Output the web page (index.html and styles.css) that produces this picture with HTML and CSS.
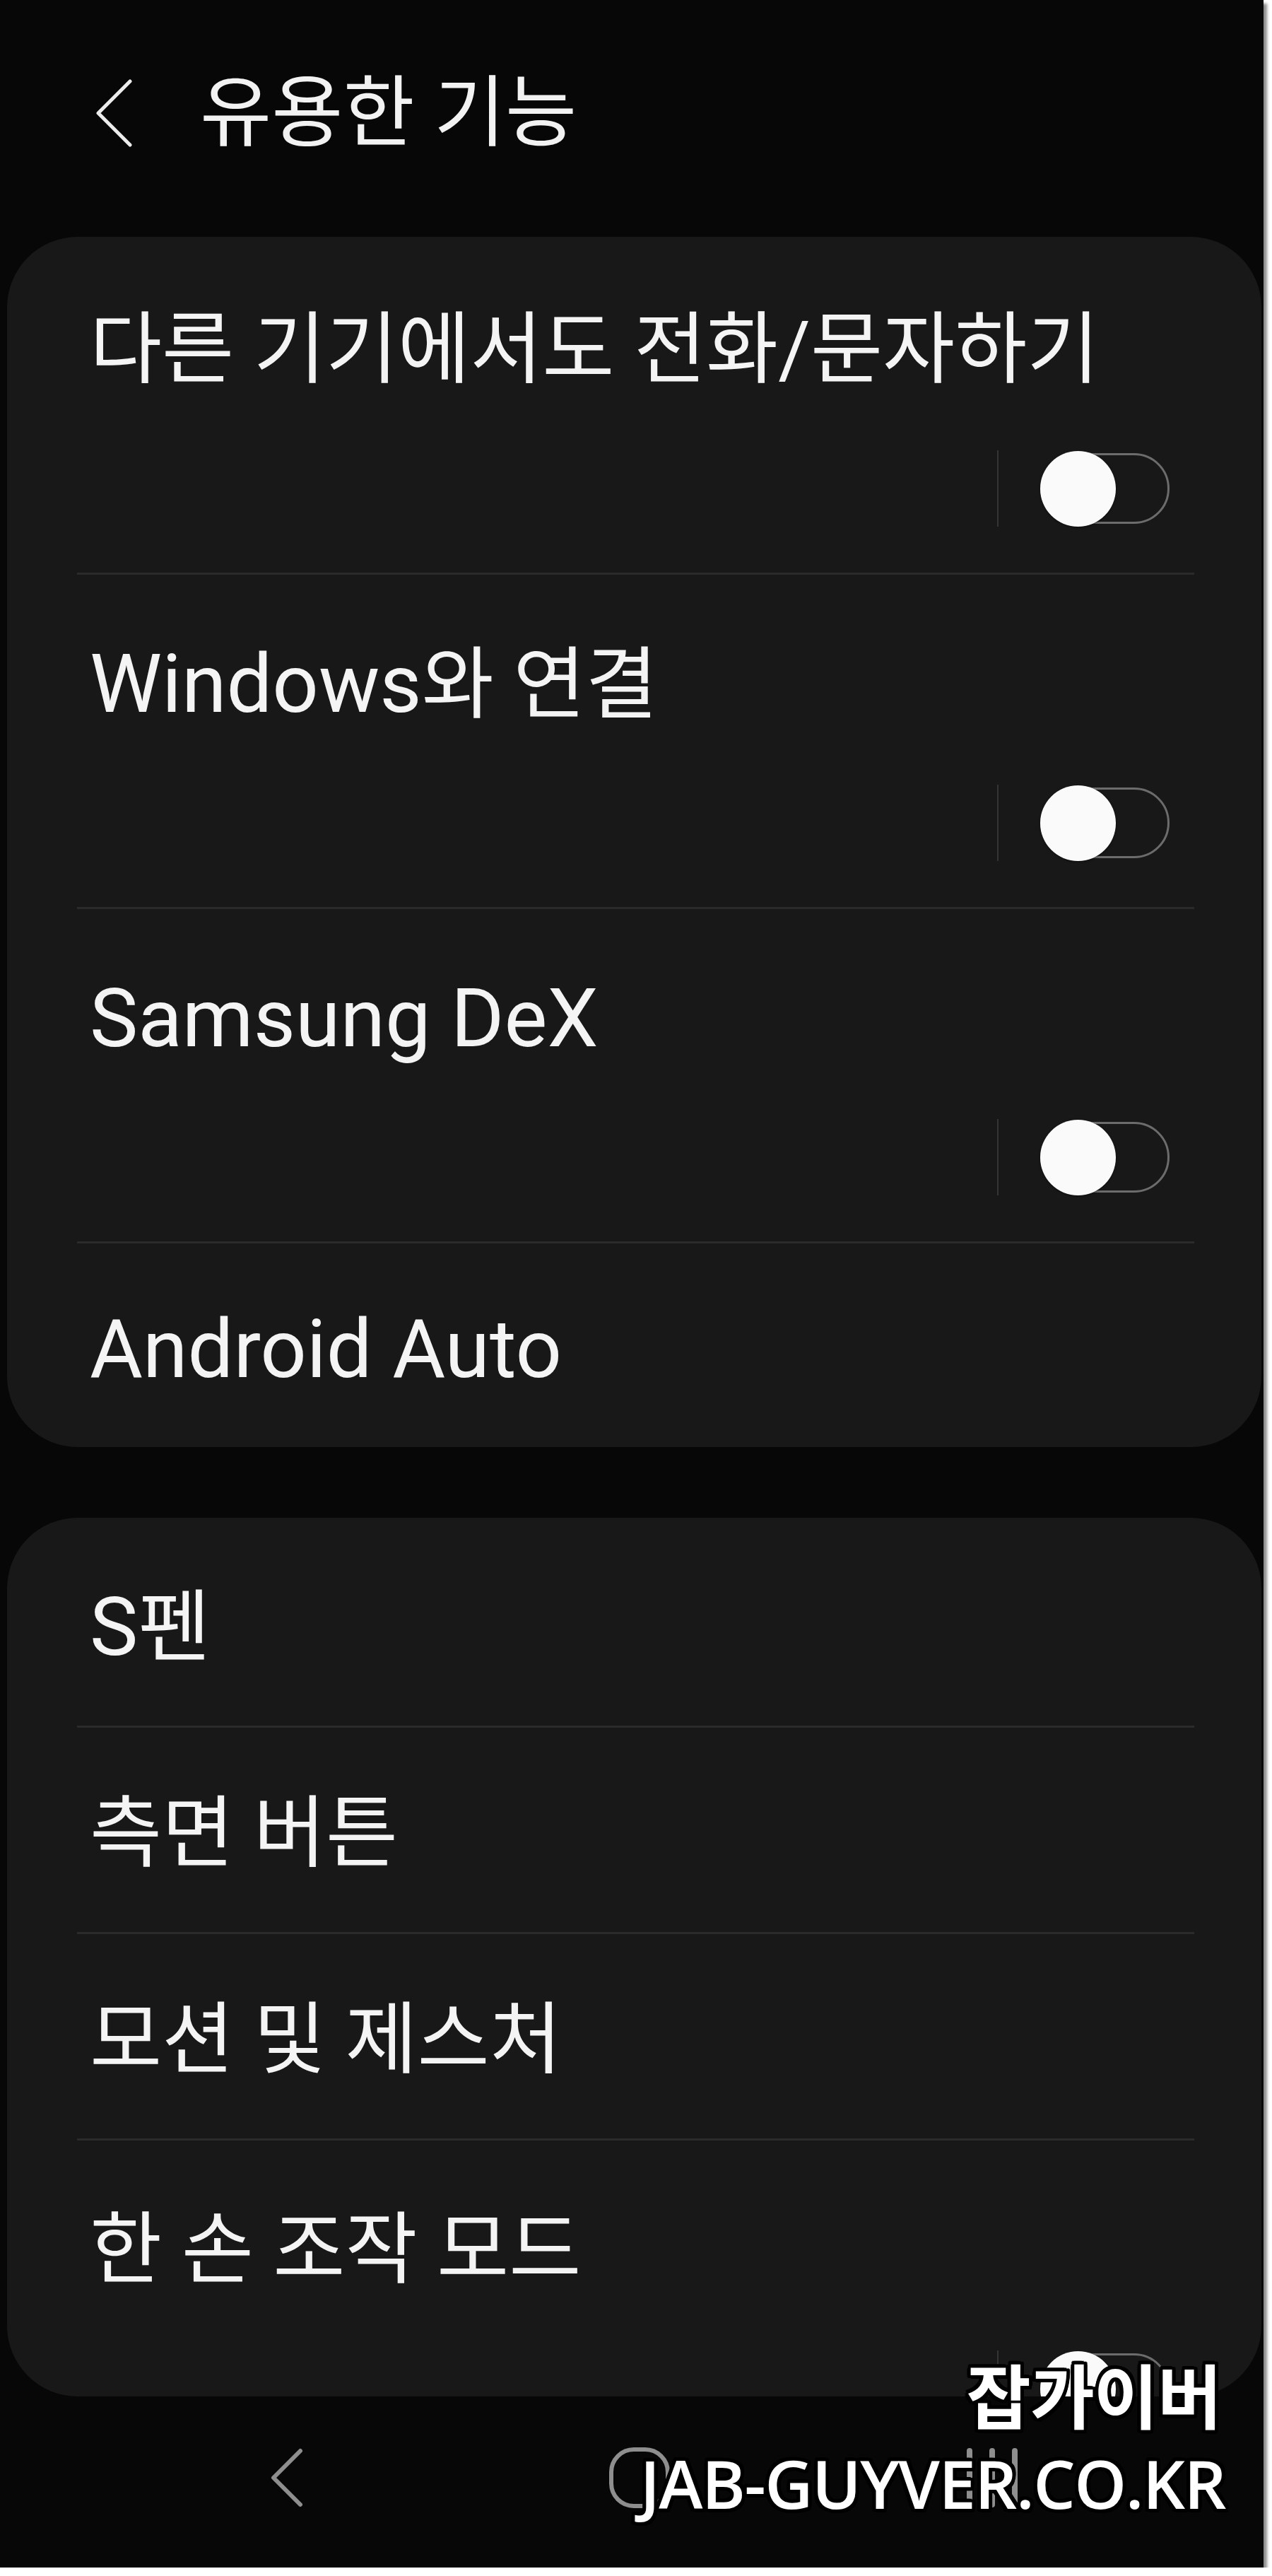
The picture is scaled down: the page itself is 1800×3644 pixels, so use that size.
FILE: index.html
```html
<!DOCTYPE html>
<html lang="ko">
<head>
<meta charset="utf-8">
<title>유용한 기능</title>
<link rel="stylesheet" href="styles.css">
</head>
<body>
<div class="screen">
  <header class="topbar">
    <svg class="back" width="56" height="96" viewBox="0 0 56 96" aria-hidden="true">
      <path d="M50 3 L5 48 L50 93" fill="none" stroke="#ececec" stroke-width="5" stroke-linecap="round" stroke-linejoin="round"/>
    </svg>
    <h1 class="title">유용한 기능</h1>
  </header>

  <section class="card card-a">
    <div class="item item-switch">
      <div class="label">다른 기기에서도 전화/문자하기</div>
      <div class="switch-row"><span class="vline"></span><span class="toggle"><span class="thumb"></span></span></div>
    </div>
    <div class="divider"></div>
    <div class="item item-switch">
      <div class="label"><span class="lat">Windows</span>와 연결</div>
      <div class="switch-row"><span class="vline"></span><span class="toggle"><span class="thumb"></span></span></div>
    </div>
    <div class="divider"></div>
    <div class="item item-switch">
      <div class="label"><span class="lat">Samsung DeX</span></div>
      <div class="switch-row"><span class="vline"></span><span class="toggle"><span class="thumb"></span></span></div>
    </div>
    <div class="divider"></div>
    <div class="item item-plain item-last">
      <div class="label"><span class="lat">Android Auto</span></div>
    </div>
  </section>

  <section class="card card-b">
    <div class="item item-plain">
      <div class="label"><span class="lat">S</span>펜</div>
    </div>
    <div class="divider"></div>
    <div class="item item-plain">
      <div class="label">측면 버튼</div>
    </div>
    <div class="divider"></div>
    <div class="item item-plain">
      <div class="label">모션 및 제스처</div>
    </div>
    <div class="divider"></div>
    <div class="item item-switch">
      <div class="label">한 손 조작 모드</div>
      <div class="switch-row"><span class="vline"></span><span class="toggle"><span class="thumb"></span></span></div>
    </div>
  </section>

  <nav class="navbar">
    <div class="nav-slot">
      <svg width="50" height="84" viewBox="0 0 50 84" aria-hidden="true">
        <path d="M44 4 L6 42 L44 80" fill="none" stroke="#8e8e8e" stroke-width="6" stroke-linecap="round" stroke-linejoin="round"/>
      </svg>
    </div>
    <div class="nav-slot">
      <svg width="88" height="88" viewBox="0 0 88 88" aria-hidden="true">
        <rect x="4" y="4" width="80" height="80" rx="32" ry="32" fill="none" stroke="#8e8e8e" stroke-width="6"/>
      </svg>
    </div>
    <div class="nav-slot">
      <svg width="80" height="84" viewBox="0 0 80 84" aria-hidden="true">
        <path d="M8 4 V80 M40 4 V80 M72 4 V80" fill="none" stroke="#8e8e8e" stroke-width="8" stroke-linecap="round"/>
      </svg>
    </div>
  </nav>

  <div class="watermark">
    <div class="wm-ko">잡가이버</div>
    <div class="wm-en">JAB-GUYVER.CO.KR</div>
  </div>
</div>
</body>
</html>
```

FILE: styles.css
```css
* { box-sizing: border-box; }

html, body {
  margin: 0;
  padding: 0;
  background: #ffffff;
}

.screen {
  position: relative;
  width: 1788px;
  height: 3632px;
  background: #070707;
  box-shadow: 5px 5px 4px rgba(0, 0, 0, 0.45);
  overflow: hidden;
  display: flex;
  flex-direction: column;
  font-family: Roboto, "Noto Sans CJK KR", sans-serif;
  color: #f4f4f4;
}

/* ---------- header ---------- */
.topbar {
  height: 335px;
  flex: none;
  display: flex;
  align-items: flex-start;
  padding: 101px 0 0 134px;
}

.back {
  flex: none;
  margin-top: 11px;
}

.title {
  margin: 0 0 0 93px;
  font-weight: 400;
  font-size: 110px;
  line-height: 120px;
  height: 120px;
  color: #f2f2f2;
}

/* ---------- cards ---------- */
.card {
  flex: none;
  margin: 0 3px 0 10px;
  background: #181818;
  border-radius: 100px;
  overflow: hidden;
}

.card-a {
  padding-top: 5px;
}

.card-b {
  margin-top: 100px;
  height: 1243px;
  padding-top: 5px;
}

.item {
  padding-left: 117px;
  padding-right: 130px;
}

.item-switch {
  height: 470px;
  padding-top: 95px;
  display: flex;
  flex-direction: column;
}

.item-plain {
  height: 289px;
  padding-top: 90px;
}

.item-last {
  height: 288px;
}

.label {
  font-size: 111px;
  line-height: 120px;
  height: 120px;
  white-space: nowrap;
}

.lat {
  font-size: 115px;
}

.divider {
  height: 3px;
  margin: 0 95px 0 99px;
  background: #2b2b2b;
}

/* ---------- switch ---------- */
.switch-row {
  margin-top: 82px;
  display: flex;
  justify-content: flex-end;
  align-items: center;
  gap: 59px;
  height: 108px;
}

.vline {
  width: 2px;
  height: 108px;
  background: #353535;
}

.toggle {
  position: relative;
  width: 183px;
  height: 100px;
  border: 3px solid #6c6c6c;
  border-radius: 50px;
}

.thumb {
  position: absolute;
  left: -3px;
  top: -6px;
  width: 107px;
  height: 107px;
  border-radius: 50%;
  background: #fafafa;
  box-shadow: 0 1px 3px rgba(0, 0, 0, 0.5);
}

/* ---------- nav bar ---------- */
.navbar {
  flex: 1;
  display: grid;
  grid-template-columns: repeat(3, 499px);
  justify-content: center;
  align-items: center;
  padding-left: 22px;
  padding-bottom: 12px;
}

.nav-slot {
  display: flex;
  justify-content: center;
  align-items: center;
}

.nav-slot svg {
  display: block;
}

/* ---------- watermark overlay ---------- */
.watermark {
  position: absolute;
  right: 54px;
  bottom: 64px;
  display: flex;
  flex-direction: column;
  align-items: flex-end;
  color: #ffffff;
  text-shadow:
    -4px -4px 0 #000, 4px -4px 0 #000, -4px 4px 0 #000, 4px 4px 0 #000,
    0 -5px 0 #000, 0 5px 0 #000, -5px 0 0 #000, 5px 0 0 #000,
    -3px -5px 0 #000, 3px 5px 0 #000, -5px 3px 0 #000, 5px -3px 0 #000;
}

.wm-ko {
  font-family: "Noto Sans CJK KR", sans-serif;
  font-weight: 700;
  font-size: 99px;
  line-height: 110px;
  letter-spacing: -1px;
  margin-right: 6px;
}

.wm-en {
  font-family: "Open Sans", "Noto Sans", sans-serif;
  font-weight: 600;
  font-size: 94px;
  line-height: 110px;
  letter-spacing: -1.5px;
  margin-top: 18px;
}
```
